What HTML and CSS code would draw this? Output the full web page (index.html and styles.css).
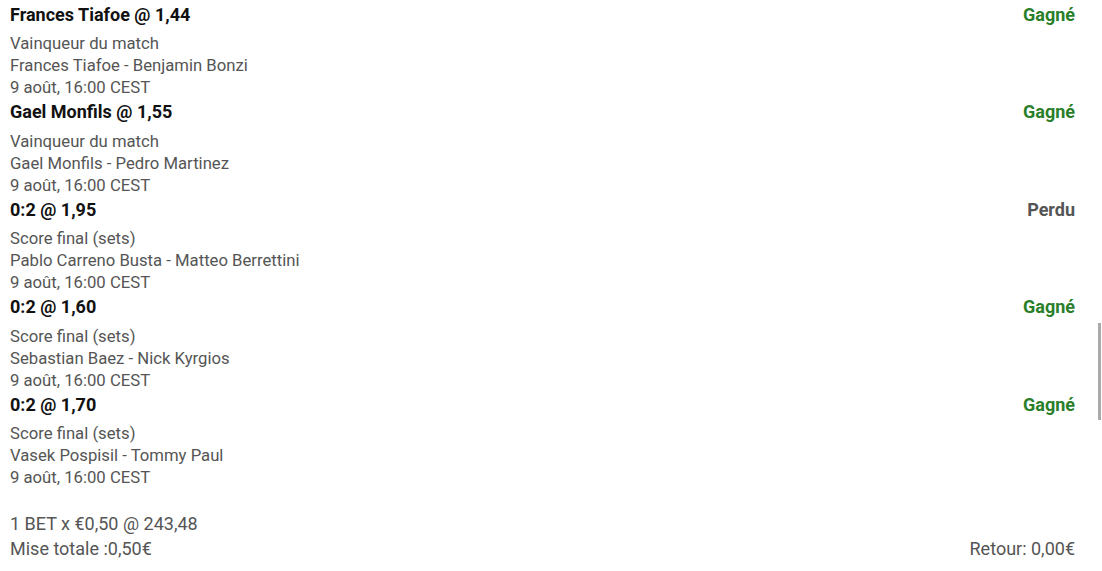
FILE: index.html
```html
<!DOCTYPE html>
<html lang="fr">
<head>
  <meta charset="UTF-8" />
  <title>Pari combiné</title>
  <link rel="stylesheet" href="styles.css">
</head>
<body>
  <div class="ticket">
    <div class="selection">
      <div class="sel-head">
        <span class="sel-title">Frances Tiafoe @ 1,44</span>
        <span class="status gagne">Gagné</span>
      </div>
      <div class="sel-info">Vainqueur du match</div>
      <div class="sel-info">Frances Tiafoe - Benjamin Bonzi</div>
      <div class="sel-info">9 août, 16:00 CEST</div>
    </div>

    <div class="selection">
      <div class="sel-head">
        <span class="sel-title">Gael Monfils @ 1,55</span>
        <span class="status gagne">Gagné</span>
      </div>
      <div class="sel-info">Vainqueur du match</div>
      <div class="sel-info">Gael Monfils - Pedro Martinez</div>
      <div class="sel-info">9 août, 16:00 CEST</div>
    </div>

    <div class="selection">
      <div class="sel-head">
        <span class="sel-title">0:2 @ 1,95</span>
        <span class="status perdu">Perdu</span>
      </div>
      <div class="sel-info">Score final (sets)</div>
      <div class="sel-info">Pablo Carreno Busta - Matteo Berrettini</div>
      <div class="sel-info">9 août, 16:00 CEST</div>
    </div>

    <div class="selection">
      <div class="sel-head">
        <span class="sel-title">0:2 @ 1,60</span>
        <span class="status gagne">Gagné</span>
      </div>
      <div class="sel-info">Score final (sets)</div>
      <div class="sel-info">Sebastian Baez - Nick Kyrgios</div>
      <div class="sel-info">9 août, 16:00 CEST</div>
    </div>

    <div class="selection">
      <div class="sel-head">
        <span class="sel-title">0:2 @ 1,70</span>
        <span class="status gagne">Gagné</span>
      </div>
      <div class="sel-info">Score final (sets)</div>
      <div class="sel-info">Vasek Pospisil - Tommy Paul</div>
      <div class="sel-info">9 août, 16:00 CEST</div>
    </div>

    <div class="summary">
      <div class="summary-line">1 BET x €0,50 @ 243,48</div>
      <div class="summary-row">
        <span>Mise totale :0,50€</span>
        <span>Retour: 0,00€</span>
      </div>
    </div>
  </div>

  <div class="scroll-thumb"></div>
</body>
</html>
```

FILE: styles.css
```css
body {
  font-family: Roboto, "Liberation Sans", sans-serif;
  background: #fff;
  color: #555;
  margin: 0;
  overflow: hidden;
}

.ticket {
  padding: 1.5px 27px 0 10px;
}

.sel-head {
  display: flex;
  justify-content: space-between;
  align-items: center;
  height: 25px;
  margin-bottom: 6.5px;
}

.sel-title {
  font-size: 18px;
  font-weight: 700;
  color: #111;
}

.status {
  font-size: 18px;
  font-weight: 700;
}

.gagne {
  color: #2a7f2a;
}

.perdu {
  color: #555;
}

.sel-info {
  font-size: 16.7px;
  line-height: 22px;
  color: #555;
}

.summary {
  margin-top: 23px;
  font-size: 18px;
  line-height: 24px;
}

.summary-row {
  display: flex;
  justify-content: space-between;
  margin-top: 1px;
}

.scroll-thumb {
  position: fixed;
  right: 1px;
  top: 323px;
  width: 3px;
  height: 97px;
  background: #aaa;
}
```
